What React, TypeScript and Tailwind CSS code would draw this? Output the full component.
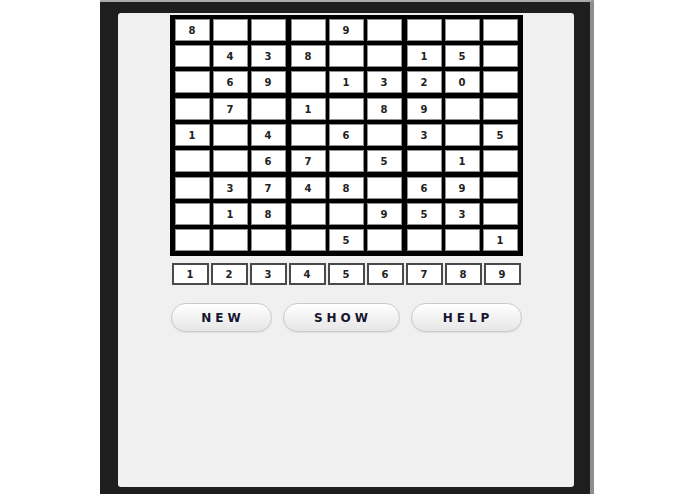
const board: string[] = [
  "8...9....",
  ".438..15.",
  ".69.1320.",
  ".7.1.89..",
  "1.4.6.3.5",
  "..67.5.1.",
  ".3748.69.",
  ".18..953.",
  "....5...1",
];

const font = { fontFamily: '"DejaVu Sans", "Liberation Sans", sans-serif' };

function Cell({ value }: { value: string }) {
  return (
    <div className="flex h-[22px] w-[35px] items-center justify-center border border-[#8e8e8e] bg-white text-[10px] font-bold text-[#222]">
      {value === "." ? "" : value}
    </div>
  );
}

function Block({ br, bc }: { br: number; bc: number }) {
  const cells = [];
  for (let r = 0; r < 3; r++) {
    for (let c = 0; c < 3; c++) {
      cells.push(<Cell key={`${r}-${c}`} value={board[br * 3 + r][bc * 3 + c]} />);
    }
  }
  return <div className="grid grid-cols-3 gap-x-[3px] gap-y-[4px]">{cells}</div>;
}

export default function App() {
  const blocks = [];
  for (let br = 0; br < 3; br++) {
    for (let bc = 0; bc < 3; bc++) {
      blocks.push(<Block key={`${br}-${bc}`} br={br} bc={bc} />);
    }
  }

  return (
    <div className="flex h-[494px] w-full bg-white" style={font}>
      <div className="ml-[100px] flex h-[494px] w-[494px] flex-col border-t-[2px] border-r-[4px] border-t-[#a9a9a9] border-r-[#8e8e8e] bg-[#1e1e1e] pt-[11px] pr-[16px] pb-[7px] pl-[18px]">
        <div className="flex flex-1 flex-col items-center rounded-[3px] bg-[#f0f0f0] pt-[2px]">
          {/* puzzle grid */}
          <div className="grid grid-cols-3 gap-[5px] bg-black px-[5px] pt-[4px] pb-[5px]">
            {blocks}
          </div>

          {/* number picker */}
          <div className="mt-[7px] flex gap-[2px]">
            {["1", "2", "3", "4", "5", "6", "7", "8", "9"].map((n) => (
              <div
                key={n}
                className="flex h-[22px] w-[37px] items-center justify-center border-2 border-[#4a4a4a] bg-white text-[10px] font-bold text-[#222]"
              >
                {n}
              </div>
            ))}
          </div>

          {/* actions */}
          <div className="mt-[18px] flex gap-[11px]">
            {[
              { label: "NEW", w: "w-[101px]" },
              { label: "SHOW", w: "w-[117px]" },
              { label: "HELP", w: "w-[111px]" },
            ].map((b) => (
              <button
                key={b.label}
                className={`${b.w} h-[29px] rounded-full border border-[#c9c9c9] bg-gradient-to-b from-white to-[#e6e6e6] pl-[4px] text-[12px] font-bold tracking-[4px] text-[#161630] shadow-[0_1px_1px_rgba(0,0,0,0.08)]`}
              >
                {b.label}
              </button>
            ))}
          </div>
        </div>
      </div>
    </div>
  );
}
